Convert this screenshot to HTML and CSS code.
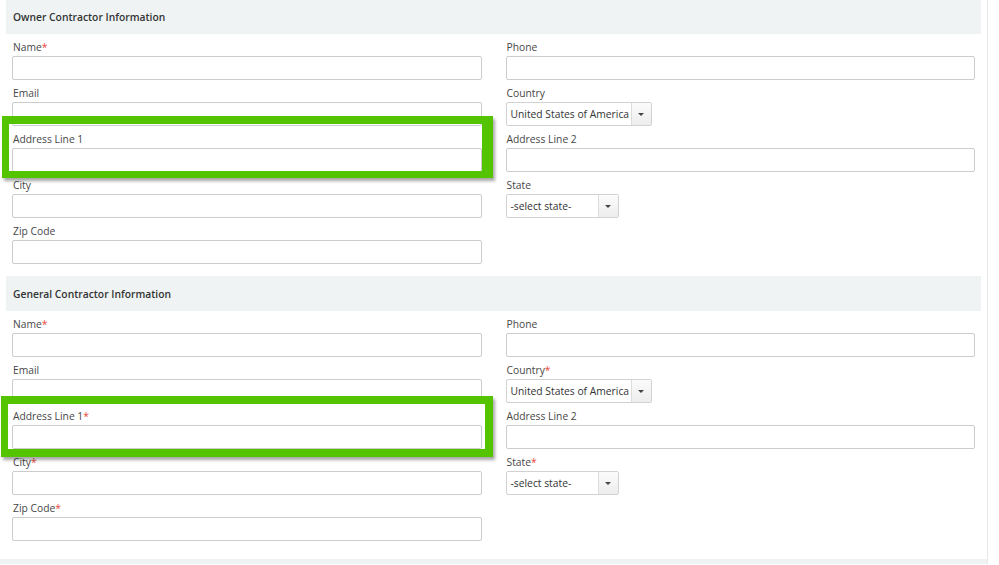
FILE: index.html
```html
<!DOCTYPE html>
<html>
<head>
<meta charset="utf-8">
<link rel="stylesheet" href="styles.css">
</head>
<body>
<div class="page">
  <div class="card">
    <section class="section first">
      <div class="section-head">Owner Contractor Information</div>
      <div class="fields">
        <div class="field"><label>Name<span class="req">*</span></label><div class="input"></div></div>
        <div class="field"><label>Phone</label><div class="input"></div></div>
        <div class="field"><label>Email</label><div class="input"></div></div>
        <div class="field"><label>Country</label><div class="select country"><span class="select-text">United States of America</span><span class="select-btn"><i class="caret"></i></span></div></div>
        <div class="field"><label>Address Line 1</label><div class="input"></div></div>
        <div class="field"><label>Address Line 2</label><div class="input"></div></div>
        <div class="field"><label>City</label><div class="input"></div></div>
        <div class="field"><label>State</label><div class="select state"><span class="select-text">-select state-</span><span class="select-btn"><i class="caret"></i></span></div></div>
        <div class="field"><label>Zip Code</label><div class="input"></div></div>
      </div>
    </section>
    <section class="section second">
      <div class="section-head">General Contractor Information</div>
      <div class="fields">
        <div class="field"><label>Name<span class="req">*</span></label><div class="input"></div></div>
        <div class="field"><label>Phone</label><div class="input"></div></div>
        <div class="field"><label>Email</label><div class="input"></div></div>
        <div class="field"><label>Country<span class="req">*</span></label><div class="select country"><span class="select-text">United States of America</span><span class="select-btn"><i class="caret"></i></span></div></div>
        <div class="field"><label>Address Line 1<span class="req">*</span></label><div class="input"></div></div>
        <div class="field"><label>Address Line 2</label><div class="input"></div></div>
        <div class="field"><label>City<span class="req">*</span></label><div class="input"></div></div>
        <div class="field"><label>State<span class="req">*</span></label><div class="select state"><span class="select-text">-select state-</span><span class="select-btn"><i class="caret"></i></span></div></div>
        <div class="field"><label>Zip Code<span class="req">*</span></label><div class="input"></div></div>
      </div>
    </section>
  </div>
  <div class="highlight hl-one"></div>
  <div class="highlight hl-two"></div>
</div>
</body>
</html>
```

FILE: styles.css
```css
html, body {
  margin: 0;
  padding: 0;
  background: #ffffff;
  height: 565px;
  overflow: hidden;
}

body {
  font-family: "Open Sans", "DejaVu Sans", sans-serif;
  font-size: 10.3px;
  color: #3a3a3a;
}

.page {
  position: relative;
  width: 987px;
  height: 565px;
  background: #f0f3f4;
  border-right: 1px solid #e6e9ea;
}

.card {
  background: #ffffff;
  padding: 0 6px 18px 6px;
}

.section.first {
  margin-top: -1px;
}

.section.second {
  margin-top: 12px;
}

.section-head {
  height: 35px;
  display: flex;
  align-items: center;
  padding-left: 7px;
  background: #eff3f4;
  font-weight: 600;
  color: #333333;
}

.fields {
  display: grid;
  grid-template-columns: 1fr 1fr;
  column-gap: 24px;
  row-gap: 6px;
  padding: 6px 6px 0 6px;
}

.field label {
  display: block;
  line-height: 14px;
  height: 14px;
  margin-bottom: 2px;
  padding-left: 1px;
  color: #474747;
  white-space: nowrap;
}

.req {
  color: #e8483b;
}

.input {
  height: 24px;
  box-sizing: border-box;
  border: 1px solid #cccccc;
  border-radius: 2px;
  background: #ffffff;
}

.select {
  display: flex;
  height: 24px;
  box-sizing: border-box;
  border: 1px solid #d2d2d2;
  border-radius: 2px;
  background: #ffffff;
  overflow: hidden;
}

.select.country {
  width: 146px;
}

.select.state {
  width: 113px;
}

.select-text {
  flex: 1;
  overflow: hidden;
  white-space: nowrap;
  padding-left: 4px;
  line-height: 22px;
  color: #333333;
}

.select-btn {
  width: 19px;
  flex: none;
  border-left: 1px solid #dcdcdc;
  background: linear-gradient(#fbfbfb, #ededed);
  display: flex;
  align-items: center;
  justify-content: center;
}

.caret {
  display: block;
  width: 0;
  height: 0;
  border-left: 3px solid transparent;
  border-right: 3px solid transparent;
  border-top: 3px solid #444444;
}

.highlight {
  position: absolute;
  box-sizing: border-box;
  border-style: solid;
  border-color: #54c300;
  box-shadow: 2px 3px 3px rgba(0, 0, 0, 0.35);
}

.hl-one {
  left: 2px;
  top: 117px;
  width: 491px;
  height: 62px;
  border-width: 8px 11px 7px 7px;
}

.hl-two {
  left: 1px;
  top: 397px;
  width: 492px;
  height: 61px;
  border-width: 8px 8px 8px 7px;
}
```
